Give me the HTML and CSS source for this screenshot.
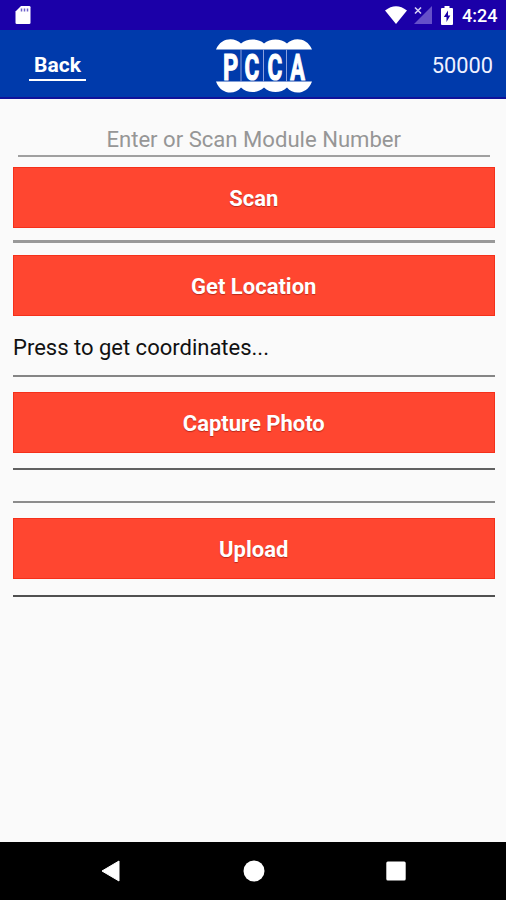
FILE: index.html
```html
<!DOCTYPE html>
<html lang="en">
<head>
<meta charset="utf-8">
<title>PCCA Module Scan</title>
<link rel="stylesheet" href="styles.css">
</head>
<body>
<div class="status">
  <svg class="sd" width="16" height="20" viewBox="0 0 16 20"><path d="M6 1h8.200q1.300 0 1.300 1.300V17.700q0 1.300-1.300 1.300H1.800Q.5 19 .5 17.700V6.500z" fill="#fff"/><path d="M6.500 3.500v3M9.500 3.500v3M12.500 3.500v3" stroke="#6e60ca" stroke-width="1.500"/></svg>
  <div class="status-right">
    <svg class="wifi" width="22" height="18" viewBox="0 0 22 18"><path d="M0 4.500Q11-4 22 4.500L11 18z" fill="#fff"/></svg>
    <svg class="signal" width="18" height="18" viewBox="0 0 18 18"><path d="M18 0v18H0z" fill="#6650c9"/><path d="M0 0h9v9H0z" fill="#1b00a8"/><path d="M1 1.500l6 6M7 1.500l-6 6" stroke="#d8d2f5" stroke-width="1.600"/></svg>
    <svg class="battery" width="12" height="19" viewBox="0 0 12 19"><path d="M3.500 0h5v2H11q1 0 1 1v15q0 1-1 1H1q-1 0-1-1V3q0-1 1-1h2.500z" fill="#fff"/><path d="M7 4.500L2.800 11h2.700v5L9.300 9.500H7z" fill="#1b00a8"/></svg>
    <span class="clock">4:24</span>
  </div>
</div>
<header class="header">
  <a class="back">Back</a>
  <svg class="logo" width="98" height="54" viewBox="0 0 98 54">
    <path d="M1 10.500C6-2 20-2 26 4.500C32-.8 43-.8 49 4.500C55-.8 66-.8 72 4.500C78-2 92-2 97 10.500z" fill="#fff"/>
    <path d="M1 42.500C6 56 20 56 26 48.500C32 54.500 43 54.500 49 48.500C55 54.500 66 54.500 72 48.500C78 56 92 56 97 42.500z" fill="#fff"/>
    <path d="M26 10v33M48.500 10v33M71.500 10v33" stroke="#8ba0de" stroke-width="1"/>
    <g class="logo-text">
      <text transform="translate(15.500 40.500) scale(.64 1)">P</text>
      <text transform="translate(37 40.500) scale(.61 1)">C</text>
      <text transform="translate(60 40.500) scale(.61 1)">C</text>
      <text transform="translate(82.500 40.500) scale(.59 1)">A</text>
    </g>
  </svg>
  <span class="count">50000</span>
</header>
<main class="content">
  <div class="field">Enter or Scan Module Number</div>
  <button class="btn scan">Scan</button>
  <div class="rule r1"></div>
  <button class="btn">Get Location</button>
  <p class="coords">Press to get coordinates...</p>
  <div class="rule r2"></div>
  <button class="btn">Capture Photo</button>
  <div class="rule r3"></div>
  <div class="rule r4"></div>
  <button class="btn">Upload</button>
  <div class="rule r5"></div>
</main>
<nav class="nav">
  <svg width="20" height="22" viewBox="0 0 20 22"><path d="M18 1v20L1 11z" fill="#fff" stroke="#fff" stroke-linejoin="round"/></svg>
  <svg width="22" height="22" viewBox="0 0 22 22"><circle cx="11" cy="11" r="10.500" fill="#fff"/></svg>
  <svg width="20" height="20" viewBox="0 0 20 20"><rect x=".3" y=".5" width="19.400" height="19" rx="1.500" fill="#fff"/></svg>
</nav>
</body>
</html>
```
FILE: styles.css
```css
* { box-sizing: border-box; }
body {
  margin: 0;
  width: 506px;
  height: 900px;
  display: flex;
  flex-direction: column;
  overflow: hidden;
  background: #fafafa;
  font-family: Roboto, sans-serif;
}
svg { display: block; flex: none; }
.status {
  flex: none;
  height: 30px;
  background: #1b00a8;
  display: flex;
  justify-content: space-between;
  padding: 5px 9px 0 15px;
}
.status-right { display: flex; align-items: flex-start; }
.wifi { margin: 1px 7px 0 0; }
.signal { margin: 1px 9px 0 0; }
.battery { margin: 1px 9px 0 0; }
.clock { color: #fff; font-size: 18px; line-height: 22px; font-weight: 500; width: 35px; white-space: nowrap; }
.header {
  flex: none;
  height: 69px;
  background: #003aab;
  border-bottom: 2px solid #10129b;
  display: grid;
  grid-template-columns: 186px 98px 1fr;
  padding: 0 13px 0 29px;
}
.back {
  justify-self: start;
  width: 57px;
  height: 29px;
  margin-top: 22px;
  border-bottom: 2px solid #fff;
  color: #fff;
  font-size: 21px;
  font-weight: 700;
  line-height: 27px;
  text-align: center;
}
.logo { margin-top: 9px; }
.logo-text { fill: #fff; stroke: #fff; stroke-width: 1.2px; font-size: 37px; font-weight: 700; text-anchor: middle; }
.count { justify-self: end; color: #f0f1ff; font-size: 21.800px; line-height: 26px; margin-top: 23px; }
.content { flex: 1; padding: 0 11.500px 0 13px; display: flex; flex-direction: column; }
.field {
  height: 38px;
  margin: 20px 5px 0;
  border-bottom: 2px solid #a0a0a0;
  color: #969696;
  font-size: 22.100px;
  line-height: 41px;
  text-align: center;
}
.btn {
  flex: none;
  height: 60.500px;
  border: 1px solid #f5301a;
  padding: 2px 0 0;
  background: #ff4630;
  color: #fff;
  font-family: inherit;
  font-size: 22px;
  font-weight: 700;
  text-shadow: 0 1px 1px #b92a1a;
}
.scan { margin-top: 10px; }
.rule { flex: none; height: 2px; background: #999; }
.r1 { height: 3px; margin: 12px 0 12.500px; }
.coords { margin: 15px 0 0; height: 44px; color: #111; font-size: 22px; line-height: 33px; }
.r2 { margin-bottom: 15.500px; background: #858585; }
.r3 { margin: 15.500px 0 31px; background: #606060; }
.r4 { margin-bottom: 15px; background: #8c8c8c; }
.r5 { margin-top: 16px; background: #505050; }
.nav {
  flex: none;
  height: 58px;
  background: #000;
  display: flex;
  align-items: center;
  justify-content: space-between;
  padding: 0 100px 0 101px;
}
```
